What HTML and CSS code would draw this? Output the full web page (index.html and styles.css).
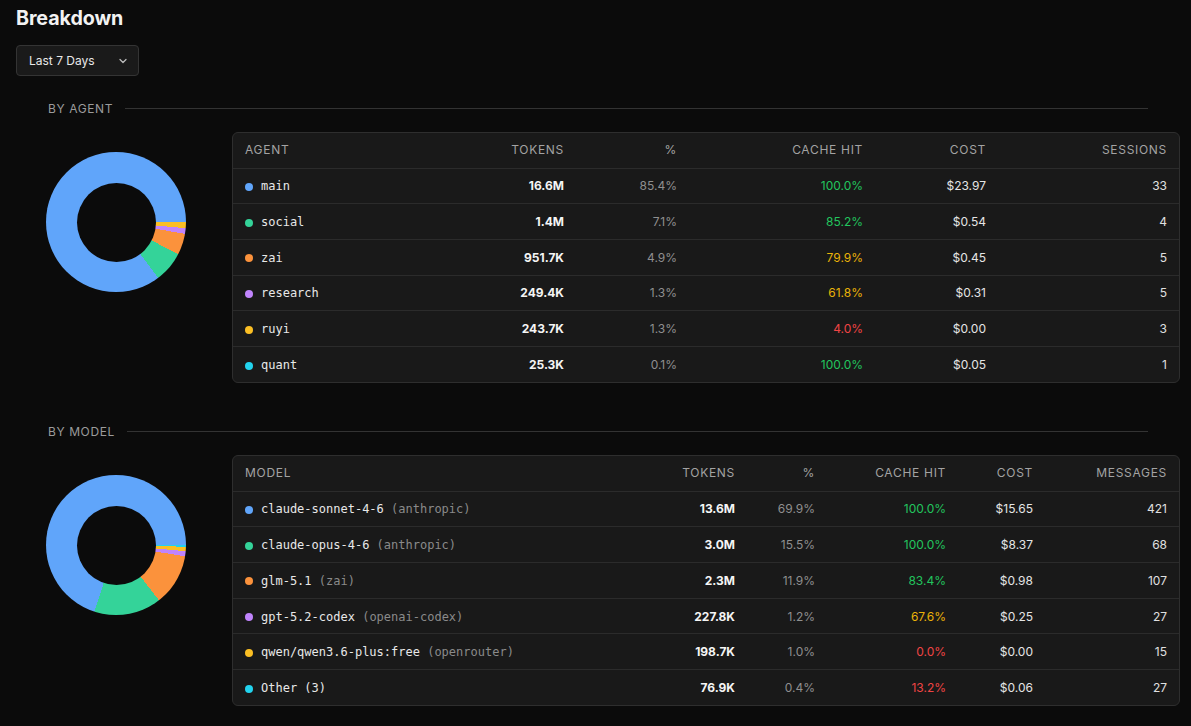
FILE: index.html
```html
<!DOCTYPE html>
<html>
<head>
<meta charset="utf-8">
<link rel="stylesheet" href="styles.css">
</head>
<body>
<div class="page">
  <h1 class="title">Breakdown</h1>
  <div class="select">
    <span>Last 7 Days</span>
    <svg class="chev" width="10" height="10" viewBox="0 0 10 10"><path d="M2 3.5 L5 6.5 L8 3.5" fill="none" stroke="#bbb" stroke-width="1.3" stroke-linecap="round" stroke-linejoin="round"/></svg>
  </div>

  <section class="section">
    <div class="section-head"><span>BY AGENT</span><div class="rule"></div></div>
    <div class="section-body">
      <div class="chart-col"><div class="donut donut-agent"><div class="hole"></div></div></div>
      <div class="table-wrap">
        <table class="tbl agent">
          <colgroup><col style="width:200px"><col style="width:143px"><col style="width:113px"><col style="width:186px"><col style="width:123px"><col></colgroup>
          <thead><tr><th class="l">AGENT</th><th>TOKENS</th><th>%</th><th>CACHE HIT</th><th>COST</th><th>SESSIONS</th></tr></thead>
          <tbody>
            <tr><td class="l"><span class="dot c-blue"></span><span class="name">main</span></td><td class="tok">16.6M</td><td class="pct">85.4%</td><td class="hit-g">100.0%</td><td class="cost">$23.97</td><td class="num">33</td></tr>
            <tr><td class="l"><span class="dot c-green"></span><span class="name">social</span></td><td class="tok">1.4M</td><td class="pct">7.1%</td><td class="hit-g">85.2%</td><td class="cost">$0.54</td><td class="num">4</td></tr>
            <tr><td class="l"><span class="dot c-orange"></span><span class="name">zai</span></td><td class="tok">951.7K</td><td class="pct">4.9%</td><td class="hit-y">79.9%</td><td class="cost">$0.45</td><td class="num">5</td></tr>
            <tr><td class="l"><span class="dot c-purple"></span><span class="name">research</span></td><td class="tok">249.4K</td><td class="pct">1.3%</td><td class="hit-y">61.8%</td><td class="cost">$0.31</td><td class="num">5</td></tr>
            <tr><td class="l"><span class="dot c-yellow"></span><span class="name">ruyi</span></td><td class="tok">243.7K</td><td class="pct">1.3%</td><td class="hit-r">4.0%</td><td class="cost">$0.00</td><td class="num">3</td></tr>
            <tr><td class="l"><span class="dot c-cyan"></span><span class="name">quant</span></td><td class="tok">25.3K</td><td class="pct">0.1%</td><td class="hit-g">100.0%</td><td class="cost">$0.05</td><td class="num">1</td></tr>
          </tbody>
        </table>
      </div>
    </div>
  </section>

  <section class="section">
    <div class="section-head"><span>BY MODEL</span><div class="rule"></div></div>
    <div class="section-body">
      <div class="chart-col"><div class="donut donut-model"><div class="hole"></div></div></div>
      <div class="table-wrap">
        <table class="tbl model">
          <colgroup><col style="width:370px"><col style="width:144px"><col style="width:80px"><col style="width:131px"><col style="width:87px"><col></colgroup>
          <thead><tr><th class="l">MODEL</th><th>TOKENS</th><th>%</th><th>CACHE HIT</th><th>COST</th><th>MESSAGES</th></tr></thead>
          <tbody>
            <tr><td class="l"><span class="dot c-blue"></span><span class="name">claude-sonnet-4-6 <span class="prov">(anthropic)</span></span></td><td class="tok">13.6M</td><td class="pct">69.9%</td><td class="hit-g">100.0%</td><td class="cost">$15.65</td><td class="num">421</td></tr>
            <tr><td class="l"><span class="dot c-green"></span><span class="name">claude-opus-4-6 <span class="prov">(anthropic)</span></span></td><td class="tok">3.0M</td><td class="pct">15.5%</td><td class="hit-g">100.0%</td><td class="cost">$8.37</td><td class="num">68</td></tr>
            <tr><td class="l"><span class="dot c-orange"></span><span class="name">glm-5.1 <span class="prov">(zai)</span></span></td><td class="tok">2.3M</td><td class="pct">11.9%</td><td class="hit-g">83.4%</td><td class="cost">$0.98</td><td class="num">107</td></tr>
            <tr><td class="l"><span class="dot c-purple"></span><span class="name">gpt-5.2-codex <span class="prov">(openai-codex)</span></span></td><td class="tok">227.8K</td><td class="pct">1.2%</td><td class="hit-y">67.6%</td><td class="cost">$0.25</td><td class="num">27</td></tr>
            <tr><td class="l"><span class="dot c-yellow"></span><span class="name">qwen/qwen3.6-plus:free <span class="prov">(openrouter)</span></span></td><td class="tok">198.7K</td><td class="pct">1.0%</td><td class="hit-r">0.0%</td><td class="cost">$0.00</td><td class="num">15</td></tr>
            <tr><td class="l"><span class="dot c-cyan"></span><span class="name">Other (3)</span></td><td class="tok">76.9K</td><td class="pct">0.4%</td><td class="hit-r">13.2%</td><td class="cost">$0.06</td><td class="num">27</td></tr>
          </tbody>
        </table>
      </div>
    </div>
  </section>
</div>
</body>
</html>
```

FILE: styles.css
```css
* { box-sizing: border-box; }
html, body { margin: 0; padding: 0; background: #0b0b0b; }
body {
  font-family: Inter, "Liberation Sans", Arial, sans-serif;
  color: #e5e5e5;
  width: 1191px;
  height: 726px;
  overflow: hidden;
}
.page { padding: 0 11px 0 16px; }
.title {
  margin: 5px 0 0;
  font-size: 19.7px;
  line-height: 26px;
  font-weight: 700;
  color: #f2f2f2;
  letter-spacing: -0.1px;
}
.select {
  margin-top: 14px;
  width: 123px;
  height: 31px;
  display: flex;
  align-items: center;
  justify-content: space-between;
  padding: 0 10px 0 12px;
  background: #1a1a1a;
  border: 1px solid #343434;
  border-radius: 4px;
  font-size: 12px;
  color: #e8e8e8;
}
.chev { display: block; }
.section { margin-top: 24px; }
.section + .section { margin-top: 40px; }
.section-head {
  margin: 0 32px;
  height: 17px;
  display: flex;
  align-items: center;
  gap: 12px;
  font-size: 12px;
  letter-spacing: 0.6px;
  color: #9b9b9b;
}
.rule { flex: 1; height: 1px; background: #333; }
.section-body {
  margin-top: 15px;
  display: flex;
  gap: 16px;
  align-items: flex-start;
}
.chart-col {
  width: 200px;
  flex: none;
  display: flex;
  justify-content: center;
  padding-top: 20px;
}
.donut {
  width: 140px;
  height: 140px;
  border-radius: 50%;
  position: relative;
}
.hole {
  position: absolute;
  left: 30.5px; top: 30.5px;
  width: 79px; height: 79px;
  border-radius: 50%;
  background: #0b0b0b;
}
.donut-agent {
  background: conic-gradient(from 90deg,
    #22d3ee 0 0.1%, #fbbf24 0.1% 1.4%, #c084fc 1.4% 2.7%, #fb923c 2.7% 7.6%,
    #34d399 7.6% 14.7%, #60a5fa 14.7% 100%);
}
.donut-model {
  background: conic-gradient(from 90deg,
    #22d3ee 0 0.4%, #fbbf24 0.4% 1.4%, #c084fc 1.4% 2.6%, #fb923c 2.6% 14.5%,
    #34d399 14.5% 30%, #60a5fa 30% 100%);
}
.table-wrap {
  flex: 1;
  background: #191919;
  border: 1px solid #2e2e2e;
  border-radius: 6px;
  overflow: hidden;
}
.tbl {
  width: 100%;
  border-collapse: collapse;
  table-layout: fixed;
  font-size: 12px;
}
.tbl th, .tbl td {
  padding: 0 12px;
  text-align: right;
  white-space: nowrap;
}
.tbl th {
  height: 35px;
  padding-bottom: 1px;
  font-weight: 400;
  color: #a3a3a3;
  letter-spacing: 0.7px;
}
.tbl td {
  height: 35.7px;
  border-top: 1px solid #2b2b2b;
  color: #e5e5e5;
}
.tbl .l { text-align: left; }
.dot {
  display: inline-block;
  width: 8px; height: 8px;
  border-radius: 50%;
  margin-right: 8px;
  vertical-align: -0.5px;
}
.tbl .name { font-family: "DejaVu Sans Mono", "Liberation Mono", monospace; font-size: 12px; color: #e8e8e8; }
.tbl .prov { color: #8a8a8a; }
.tbl .tok { font-weight: 700; color: #f5f5f5; }
.tbl .pct { color: #8f8f8f; }
.tbl .cost { color: #e5e5e5; }
.tbl .num { color: #e0e0e0; }
.tbl .hit-g { color: #22c55e; }
.tbl .hit-y { color: #eab308; }
.tbl .hit-r { color: #ef4444; }
.c-blue { background: #60a5fa; }
.c-green { background: #34d399; }
.c-orange { background: #fb923c; }
.c-purple { background: #c084fc; }
.c-yellow { background: #fbbf24; }
.c-cyan { background: #22d3ee; }
```
